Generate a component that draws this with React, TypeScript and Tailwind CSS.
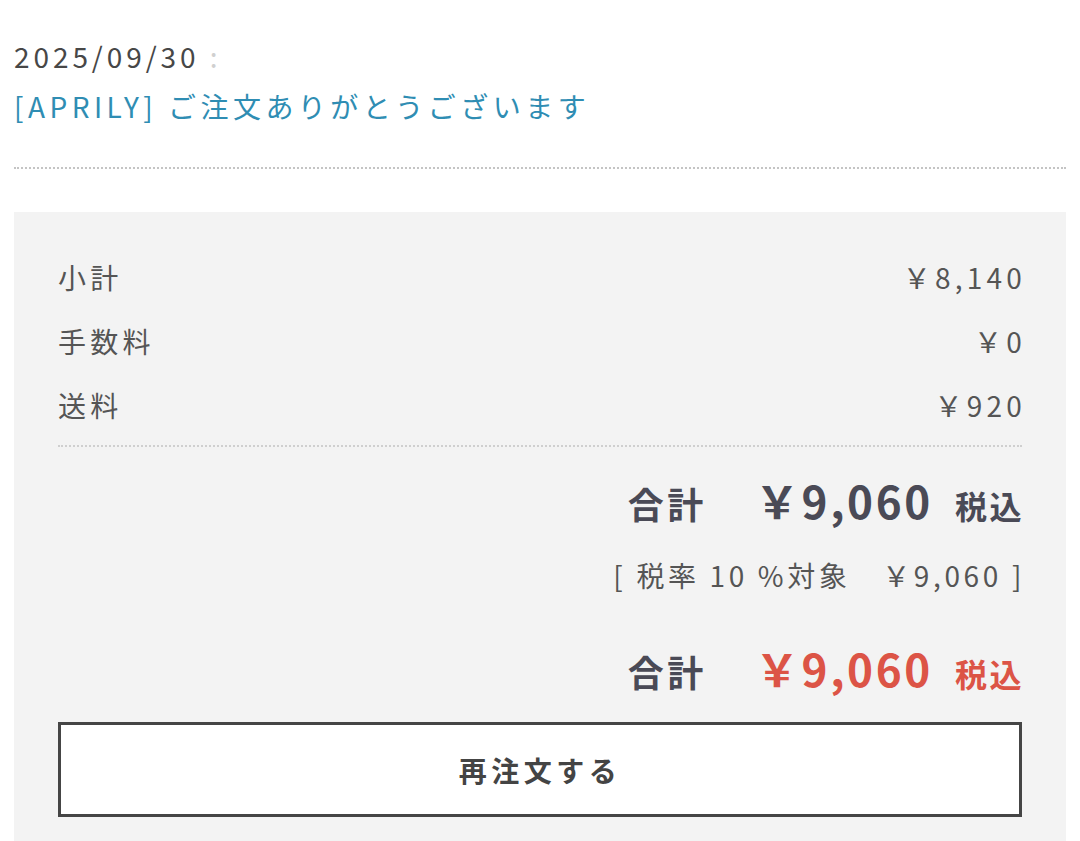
const jp = "font-['Noto_Sans_CJK_JP','Noto_Sans',sans-serif]";

function FeeRow({ label, value }: { label: string; value: string }) {
  return (
    <div className="flex items-center justify-between leading-[64px] text-[28px] tracking-[0.15em] text-[#555]">
      <span>{label}</span>
      <span className="-mr-[4px]">{value}</span>
    </div>
  );
}

function TotalRow({ red }: { red?: boolean }) {
  const tone = red ? 'text-[#dc5446]' : 'text-[#4a4a56]';
  return (
    <div className="flex items-baseline justify-end leading-[60px] font-bold">
      <span className="text-[36px] tracking-[0.1em] text-[#4a4a56]">合計</span>
      <span className={`ml-[48px] text-[44px] tracking-[0.06em] ${tone}`}>￥9,060</span>
      <span className={`ml-[22px] -mr-[2px] text-[32px] tracking-[0.08em] ${tone}`}>税込</span>
    </div>
  );
}

export default function App() {
  return (
    <div className={`min-h-[841px] bg-white px-[14px] pt-[31px] ${jp}`}>
      <div className="text-[28px] leading-[50px] tracking-[0.14em] text-[#474747]">
        2025/09/30 <span className="text-[#d0d0d0]">:</span>
      </div>
      <div className="text-[28px] leading-[50px] tracking-[0.16em] text-[#2f8db3]">
        [APRILY] ご注文ありがとうございます
      </div>
      <div className="mt-[36px] border-t-2 border-dotted border-[#c4c4c4]" />

      <div className="mt-[43px] bg-[#f3f3f3] px-[44px] pt-[33px] pb-[40px]">
        <FeeRow label="小計" value="￥8,140" />
        <FeeRow label="手数料" value="￥0" />
        <FeeRow label="送料" value="￥920" />
        <div className="mt-[8px] border-t-2 border-dotted border-[#cfcfcf]" />

        <div className="mt-[23px]">
          <TotalRow />
        </div>
        <div className="mt-[18px] -mr-[3px] text-right text-[28px] leading-[44px] tracking-[0.13em] text-[#555]">
          [ 税率 10 %対象　￥9,060 ]
        </div>
        <div className="mt-[41px]">
          <TotalRow red />
        </div>

        <button
          type="button"
          className="mt-[19px] flex h-[95px] w-full items-center justify-center border-[3px] border-[#454545] bg-white text-[28px] font-bold tracking-[0.16em] text-[#444]"
        >
          再注文する
        </button>
      </div>
    </div>
  );
}
